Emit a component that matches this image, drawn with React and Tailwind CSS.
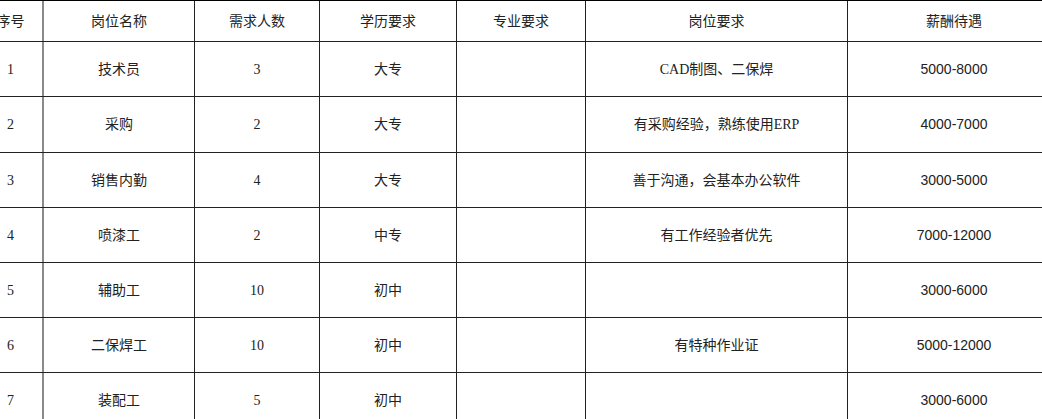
import React from "react";

const rows = [
  ["1", "技术员", "3", "大专", "", "CAD制图、二保焊", "5000-8000", "h-[55px]"],
  ["2", "采购", "2", "大专", "", "有采购经验，熟练使用ERP", "4000-7000", "h-[56px]"],
  ["3", "销售内勤", "4", "大专", "", "善于沟通，会基本办公软件", "3000-5000", "h-[55px]"],
  ["4", "喷漆工", "2", "中专", "", "有工作经验者优先", "7000-12000", "h-[55px]"],
  ["5", "辅助工", "10", "初中", "", "", "3000-6000", "h-[55px]"],
  ["6", "二保焊工", "10", "初中", "", "有特种作业证", "5000-12000", "h-[55px]"],
  ["7", "装配工", "5", "初中", "", "", "3000-6000", "h-[55px]"],
];

const serif = "font-['Liberation_Serif','Noto_Sans_CJK_SC',serif]";
const sans = "font-['Liberation_Sans','Noto_Sans_CJK_SC',sans-serif]";

function Row({ cells, hClass, header }) {
  const [a, b, c, d, e, f, g] = cells;
  const base = "flex items-center justify-center shrink-0 h-full " + serif;
  return (
    <div
      className={
        "flex text-[14px] text-[#222] border-b border-[#222] " +
        hClass +
        (header ? " border-t border-t-black" : "")
      }
    >
      <div className={base + " w-[65px] border-r-2 border-[#8a8a8a]"}>{a}</div>
      <div className={base + " w-[151px] border-r border-[#222]"}>{b}</div>
      <div className={base + " w-[125px] border-r border-[#222]"}>{c}</div>
      <div className={base + " w-[137px] border-r border-[#222]"}>{d}</div>
      <div className={base + " w-[129px] border-r border-[#222]"}>{e}</div>
      <div className={base + " w-[262px] border-r border-[#222]"}>{f}</div>
      <div
        className={
          "flex items-center justify-center shrink-0 h-full w-[192px] pl-[20px] " +
          (header ? serif : sans)
        }
      >
        {g}
      </div>
      <div className={"flex items-center justify-start shrink-0 h-full w-[80px] pl-[2px] " + serif}>
        {header ? "周休" : ""}
      </div>
    </div>
  );
}

export default function App() {
  return (
    <div className="w-[1042px] h-[419px] overflow-hidden bg-white">
      <div className="ml-[-21px] w-[1200px] flex flex-col">
        <Row
          header
          hClass="h-[42px]"
          cells={["序号", "岗位名称", "需求人数", "学历要求", "专业要求", "岗位要求", "薪酬待遇"]}
        />
        {rows.map((r) => (
          <Row key={r[0]} hClass={r[7]} cells={r.slice(0, 7)} />
        ))}
      </div>
    </div>
  );
}
